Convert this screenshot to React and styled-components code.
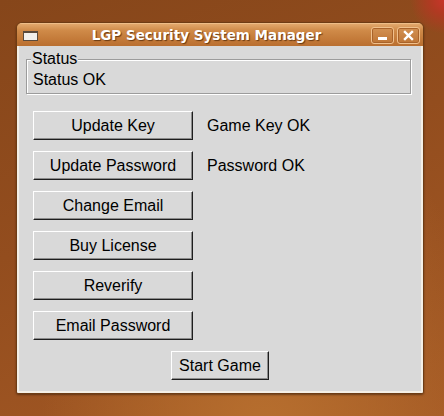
import React from 'react';
import styled, { createGlobalStyle } from 'styled-components';

const GlobalStyle = createGlobalStyle`
  html, body {
    margin: 0;
    padding: 0;
  }
  body {
    font-family: "Liberation Sans", Arial, sans-serif;
  }
`;

// Desktop behind the window
const Desktop = styled.div`
  width: 444px;
  height: 416px;
  box-sizing: border-box;
  padding: 22px 0 0 16px;
  overflow: hidden;
  background:
    radial-gradient(circle at 444px 0px, #c8352a 0, #b03a22 14px, rgba(160, 70, 30, 0) 34px),
    radial-gradient(ellipse at 60% 110%, #b8702f 0, rgba(170, 95, 40, 0) 60%),
    linear-gradient(160deg, #86461a 0%, #934d1e 45%, #a55a25 100%);
`;

const Window = styled.div`
  width: 408px;
  height: 372px;
  display: flex;
  flex-direction: column;
  border: 1px solid #6e3c14;
  border-radius: 6px 6px 3px 3px;
  box-sizing: border-box;
  overflow: hidden;
  background: #c98443;
  box-shadow: 0 1px 2px rgba(40, 20, 5, 0.5);
`;

const TitleBar = styled.div`
  height: 22px;
  flex: none;
  display: flex;
  align-items: center;
  padding: 0 3px 0 6px;
  background: linear-gradient(#e2a86c 0%, #cf8a48 30%, #c37a39 70%, #b96f30 100%);
  border-top: 1px solid #eebd88;
`;

const WindowIcon = styled.div`
  width: 13px;
  height: 7px;
  background: #f2f0ec;
  border: 1px solid #5a4a3c;
  border-top-width: 2px;
  margin-top: 2px;
`;

const Title = styled.div`
  flex: 1;
  text-align: center;
  color: #ffffff;
  font-family: "DejaVu Sans", sans-serif;
  font-weight: bold;
  font-size: 13.5px;
  text-shadow: 1px 1px 1px #6a3a12;
  padding-left: 4px;
`;

const TitleButtons = styled.div`
  display: flex;
  gap: 3px;
`;

const TitleButton = styled.div`
  width: 21px;
  height: 15px;
  border: 1px solid #f0c08c;
  border-radius: 3px;
  box-shadow: inset 0 0 0 1px #a9632a;
  background: linear-gradient(#d39152, #bf7636);
  display: flex;
  align-items: center;
  justify-content: center;
`;

const Client = styled.div`
  flex: 1;
  background: #d9d9d9;
  border: 2px solid #f4efe6;
  border-top: none;
  display: flex;
  flex-direction: column;
  padding: 13px 0 0 0;
`;

const StatusFrame = styled.div`
  position: relative;
  width: 385px;
  height: 35px;
  box-sizing: border-box;
  margin-left: 7px;
  border: 1px solid #9c9c9c;
  box-shadow: inset 1px 1px 0 #ffffff, 1px 1px 0 #ffffff;
  padding: 11px 0 0 6px;
  font-size: 16px;
  line-height: 18px;
  color: #000;
`;

const FrameLabel = styled.span`
  position: absolute;
  top: -10px;
  left: 4px;
  padding: 0 1px;
  background: #d9d9d9;
  font-size: 16px;
  line-height: 18px;
`;

const ActionGrid = styled.div`
  display: grid;
  grid-template-columns: 160px auto;
  column-gap: 13px;
  row-gap: 11px;
  align-items: center;
  margin: 17px 0 0 14px;
`;

const Button = styled.button`
  width: ${p => p.width || 160}px;
  height: 29px;
  box-sizing: border-box;
  margin: 0;
  padding: 0;
  background: #d9d9d9;
  border: 1px solid;
  border-color: #ffffff #1e1e1e #1e1e1e #ffffff;
  box-shadow: inset -1px -1px 0 #8c8c8c;
  font-family: "Liberation Sans", Arial, sans-serif;
  font-size: 16px;
  color: #000;
  cursor: pointer;
`;

const Note = styled.span`
  font-size: 16px;
  color: #000;
  padding-left: 1px;
`;

const Footer = styled.div`
  display: flex;
  justify-content: center;
  margin-top: 11px;
`;

const rows = [
  { label: 'Update Key', note: 'Game Key OK' },
  { label: 'Update Password', note: 'Password OK' },
  { label: 'Change Email' },
  { label: 'Buy License' },
  { label: 'Reverify' },
  { label: 'Email Password' },
];

export default function App() {
  return (
    <>
      <GlobalStyle />
      <Desktop>
        <Window>
          <TitleBar>
            <WindowIcon />
            <Title>LGP Security System Manager</Title>
            <TitleButtons>
              <TitleButton>
                <svg width="11" height="11" viewBox="0 0 11 11">
                  <rect x="1" y="7" width="9" height="3" fill="#fff" />
                </svg>
              </TitleButton>
              <TitleButton>
                <svg width="11" height="11" viewBox="0 0 11 11">
                  <path d="M2 2 L9 9 M9 2 L2 9" stroke="#fff" strokeWidth="2.4" strokeLinecap="square" />
                </svg>
              </TitleButton>
            </TitleButtons>
          </TitleBar>
          <Client>
            <StatusFrame>
              <FrameLabel>Status</FrameLabel>
              Status OK
            </StatusFrame>
            <ActionGrid>
              {rows.map(row => (
                <React.Fragment key={row.label}>
                  <Button>{row.label}</Button>
                  <Note>{row.note || ''}</Note>
                </React.Fragment>
              ))}
            </ActionGrid>
            <Footer>
              <Button width={98}>Start Game</Button>
            </Footer>
          </Client>
        </Window>
      </Desktop>
    </>
  );
}
